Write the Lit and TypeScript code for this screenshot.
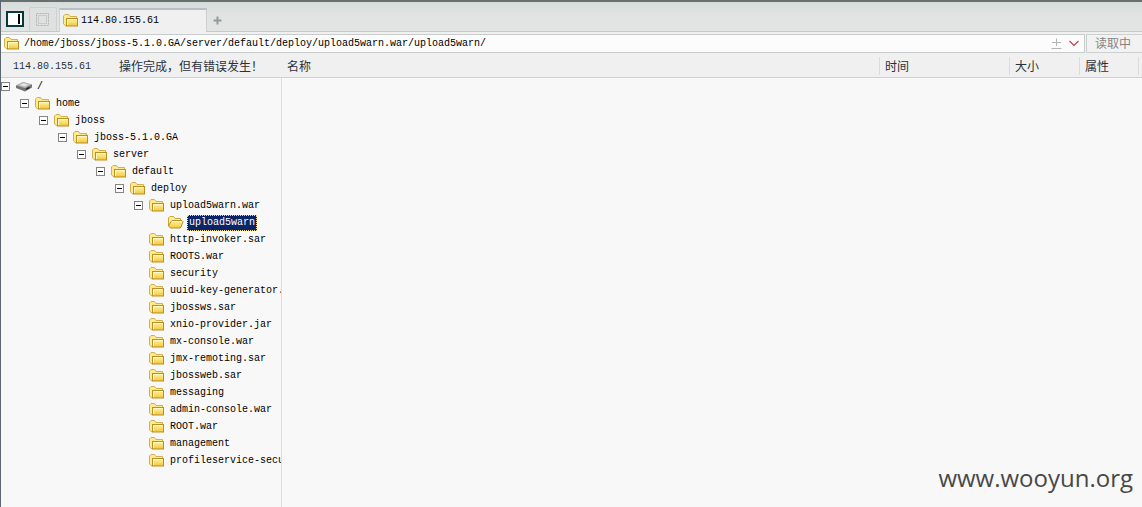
import { LitElement, html, svg, css, nothing } from "lit";
import { customElement, property, state } from "lit/decorators.js";
import { classMap } from "lit/directives/class-map.js";

interface TreeRow {
  name: string;
  level: number;
  expanded?: boolean;
}

const leaf = (name: string): TreeRow => ({ name, level: 7 });

const ROWS: TreeRow[] = [
  { name: "/", level: 0, expanded: true },
  { name: "home", level: 1, expanded: true },
  { name: "jboss", level: 2, expanded: true },
  { name: "jboss-5.1.0.GA", level: 3, expanded: true },
  { name: "server", level: 4, expanded: true },
  { name: "default", level: 5, expanded: true },
  { name: "deploy", level: 6, expanded: true },
  { name: "upload5warn.war", level: 7, expanded: true },
  { name: "upload5warn", level: 8 },
  ...[
    "http-invoker.sar",
    "ROOTS.war",
    "security",
    "uuid-key-generator.",
    "jbossws.sar",
    "xnio-provider.jar",
    "mx-console.war",
    "jmx-remoting.sar",
    "jbossweb.sar",
    "messaging",
    "admin-console.war",
    "ROOT.war",
    "management",
    "profileservice-secu",
  ].map(leaf),
];

const INDENT = 19;

@customElement("file-icon")
export class FileIcon extends LitElement {
  @property() kind: "folder" | "open" | "drive" = "folder";

  static styles = css`
    :host { display: block; flex: none; width: 16px; height: 16px; }
    svg { display: block; }
  `;

  private shape() {
    if (this.kind === "drive") {
      return svg`
        <path d="M0 7.5 L7 4 L16 6.5 L16 9.5 L9 13.5 L0 10Z" fill="#747474"/>
        <path d="M0.5 7.3 L7 4.1 L15.5 6.5 L8.8 10.1Z" fill="#bdbdbd"/>
        <path d="M4 7 L7.5 5.3 L12 6.5 L8.5 8.3Z" fill="#e4e4e4"/>
        <path d="M10 11.3 L13.5 9.4" stroke="#222" stroke-width="1.4"/>`;
    }
    if (this.kind === "open") {
      return svg`
        <defs><linearGradient id="g" x2="0" y2="1"><stop stop-color="#fff5a8"/><stop offset="1" stop-color="#f3c83c"/></linearGradient></defs>
        <path d="M0.5 12 V4 L2 2.5 H5.5 L7 4.5 H12.5 V7" fill="#fff0a0" stroke="#cda43a"/>
        <path d="M4 6.5 H14 L15 7.5 L13 13 L12 14 H2.5 L0.5 12 L3 7.5Z" fill="url(#g)" stroke="#b98f24" stroke-linejoin="round"/>
        <path d="M4.5 7.5 H13.6" stroke="#fff8cc"/>`;
    }
    return svg`
      <defs><linearGradient id="g" x2="0" y2="1"><stop stop-color="#fff6a6"/><stop offset="1" stop-color="#f2c63a"/></linearGradient></defs>
      <path d="M0.5 12 V4 L2 2.5 H5.5 L7 4.5 H13.5 V7 L3 14Z" fill="#ffeb8c" stroke="#d3b04c" stroke-linejoin="round"/>
      <rect x="3.5" y="6.5" width="11" height="7.5" fill="url(#g)" stroke="#b98f28"/>
      <path d="M4.5 7.5 H13.5 M4.5 7.5 V13" fill="none" stroke="#fffac8"/>`;
  }

  render() {
    return html`<svg width="16" height="16" viewBox="0 1 16 16" aria-hidden="true">${this.shape()}</svg>`;
  }
}

@customElement("folder-tree")
export class FolderTree extends LitElement {
  @property({ attribute: false }) rows: TreeRow[] = [];
  @state() private selected = "upload5warn";

  static styles = css`
    :host { display: block; overflow: hidden; }
    .row {
      display: flex;
      align-items: center;
      height: 17px;
      font: 10px/14px "Liberation Mono", monospace;
      color: #000;
      white-space: nowrap;
    }
    .gutter { flex: none; width: 15px; display: flex; }
    .toggle {
      width: 9px; height: 9px; padding: 0;
      border: 1px solid #848484; border-radius: 0;
      background: linear-gradient(#000, #000) center / 5px 1px no-repeat #fff;
    }
    .label {
      margin-left: 3px; padding: 0 1px; height: 16px;
      border: 1px solid transparent; border-radius: 0; box-sizing: border-box;
      background: none; color: inherit; font: inherit; flex: none;
    }
    .selected { background: #0a246a; color: #fff; border: 1px dotted #f5db95; }
  `;

  private icon(row: TreeRow) {
    if (row.level === 0) return "drive";
    return row.name === this.selected ? "open" : "folder";
  }

  render() {
    return html`${this.rows.map(
      (row) => html`
        <div class="row" style="padding-left:${row.level * INDENT}px">
          <span class="gutter">
            ${row.expanded ? html`<button class="toggle" aria-label="${row.name} -"></button>` : nothing}
          </span>
          <file-icon .kind=${this.icon(row)}></file-icon>
          <button
            class=${classMap({ label: true, selected: row.name === this.selected })}
            @click=${() => (this.selected = row.name)}
          >${row.name}</button>
        </div>`
    )}`;
  }
}

@customElement("app-root")
export class AppRoot extends LitElement {
  static styles = css`
    :host {
      display: flex; flex-direction: column;
      min-height: 100vh; box-sizing: border-box;
      border-left: 1px solid #5c6670;
      background: #f8f8f8; color: #2c3138;
      font: 12px/16px "Liberation Sans", "Noto Sans CJK SC", sans-serif;
    }
    button { font: inherit; }
    .mono { font: 10px/16px "Liberation Mono", monospace; }
    .tabs {
      display: flex; align-items: flex-end; box-sizing: border-box;
      height: 32px; padding-left: 2px;
      border-top: 2px solid #66706e; border-bottom: 1px solid #c6c9c9;
      background: linear-gradient(#d6dbda, #e2e3e3 12px);
    }
    .side {
      width: 24px; height: 24px; padding: 0; border: 0; background: none;
      display: grid; place-items: center;
    }
    .blank {
      width: 28px; height: 24px; margin: 0 2px; padding: 0; box-sizing: border-box;
      display: grid; place-items: center;
      background: #dfe0e0; border: 1px solid #cdd0d0; border-bottom: 0; border-radius: 2px 2px 0 0;
    }
    .tab {
      display: flex; align-items: center; gap: 2px; box-sizing: border-box;
      width: 148px; height: 24px; margin-bottom: -1px; padding: 0 3px;
      border: 1px solid #cdd0d0; border-top: 2px solid #b6c0c6; border-bottom: 0;
      background: #f0f0f0; color: #000;
    }
    .add {
      width: 20px; height: 22px; padding: 0; border: 0; background: none;
      display: grid; place-items: center;
    }
    .address { display: flex; height: 21px; padding-top: 2px; background: #f0f0f0; box-sizing: border-box; }
    .field {
      flex: 1; min-width: 0; display: flex; align-items: center; gap: 4px;
      padding: 0 3px; border: 1px solid #c9cccc; border-left: 0; background: #fcfcfc;
    }
    .path { flex: 1; min-width: 0; padding: 0; border: 0; outline: 0; background: none; color: #000; }
    .mini { width: 14px; height: 15px; padding: 0; border: 0; background: none; display: grid; place-items: center; }
    .read {
      width: 56px; margin-left: 1px; padding: 0 0 0 8px; text-align: left;
      border: 1px solid #cdd0d0; border-right: 0; background: #f2f2f2; color: #858585;
    }
    .panes { flex: 1; display: grid; grid-template-columns: 281px 1fr; }
    .left { display: flex; flex-direction: column; min-width: 0; }
    .status {
      display: flex; align-items: center; gap: 28px; box-sizing: border-box;
      height: 25px; padding: 3px 0 0 12px;
      background: #f0f0f0; border-bottom: 1px solid #cfd1d1;
    }
    .tree { flex: 1; border-right: 1px solid #dedede; }
    .list { width: 100%; height: 25px; border-collapse: separate; border-spacing: 0; table-layout: fixed; }
    th {
      height: 21px; padding: 3px 0 0 5px; text-align: left; font-weight: 400; line-height: 16px;
      background: linear-gradient(#dadcdc, #dadcdc) right 4px / 1px 18px no-repeat #f0f0f0;
      border-bottom: 1px solid #cfd1d1;
    }
    .time { width: 125px; }
    .size { width: 65px; }
    .attr { width: 54px; }
    .rest { width: 3px; padding: 0; background: #f0f0f0; }
    .mark {
      position: absolute; right: 9px; bottom: 12px;
      font: 24px/34px "Open Sans", "Noto Sans", sans-serif; color: #484848;
    }
  `;

  render() {
    return html`
      <nav class="tabs">
        <button class="side" aria-label="panel">
          <svg width="18" height="16" viewBox="0 0 18 16">
            <rect x="1" y="1" width="16" height="14" fill="#fff" stroke="#07373f" stroke-width="2"/>
            <path d="M13 3 V13" stroke="#000" stroke-width="2"/>
          </svg>
        </button>
        <button class="blank" aria-label="blank">
          <svg width="14" height="14" viewBox="0 0 14 14" fill="none" stroke="#b3b6b6">
            <rect x="0.5" y="0.5" width="12" height="12" stroke-dasharray="2 1"/>
            <rect x="2.5" y="2.5" width="8" height="8" stroke-dasharray="1 1"/>
          </svg>
        </button>
        <button class="tab mono"><file-icon></file-icon>114.80.155.61</button>
        <button class="add" aria-label="add">
          <svg width="9" height="9" viewBox="0 0 9 9"><path d="M4.5 0.5 V8.5 M0.5 4.5 H8.5" stroke="#8f9d9d" stroke-width="2"/></svg>
        </button>
      </nav>
      <div class="address">
        <div class="field">
          <file-icon></file-icon>
          <input class="path mono" aria-label="path" value="/home/jboss/jboss-5.1.0.GA/server/default/deploy/upload5warn.war/upload5warn/">
          <button class="mini" aria-label="bookmark">
            <svg width="11" height="11" viewBox="0 0 11 11" fill="none" stroke="#b4b4b4"><path d="M5.5 0.5 V8 M1 4.5 H10 M0.5 10.5 H10.5"/></svg>
          </button>
          <button class="mini" aria-label="history">
            <svg width="10" height="7" viewBox="0 0 10 7"><path d="M0.5 1 L5 5.5 L9.5 1" fill="none" stroke="#b8434c" stroke-width="1.2"/></svg>
          </button>
        </div>
        <button class="read">读取中</button>
      </div>
      <main class="panes">
        <section class="left">
          <div class="status"><span class="mono">114.80.155.61</span><span>操作完成，但有错误发生！</span></div>
          <folder-tree class="tree" .rows=${ROWS}></folder-tree>
        </section>
        <section>
          <table class="list">
            <thead>
              <tr><th>名称</th><th class="time">时间</th><th class="size">大小</th><th class="attr">属性</th><th class="rest"></th></tr>
            </thead>
          </table>
        </section>
      </main>
      <div class="mark">www.wooyun.org</div>
    `;
  }
}
